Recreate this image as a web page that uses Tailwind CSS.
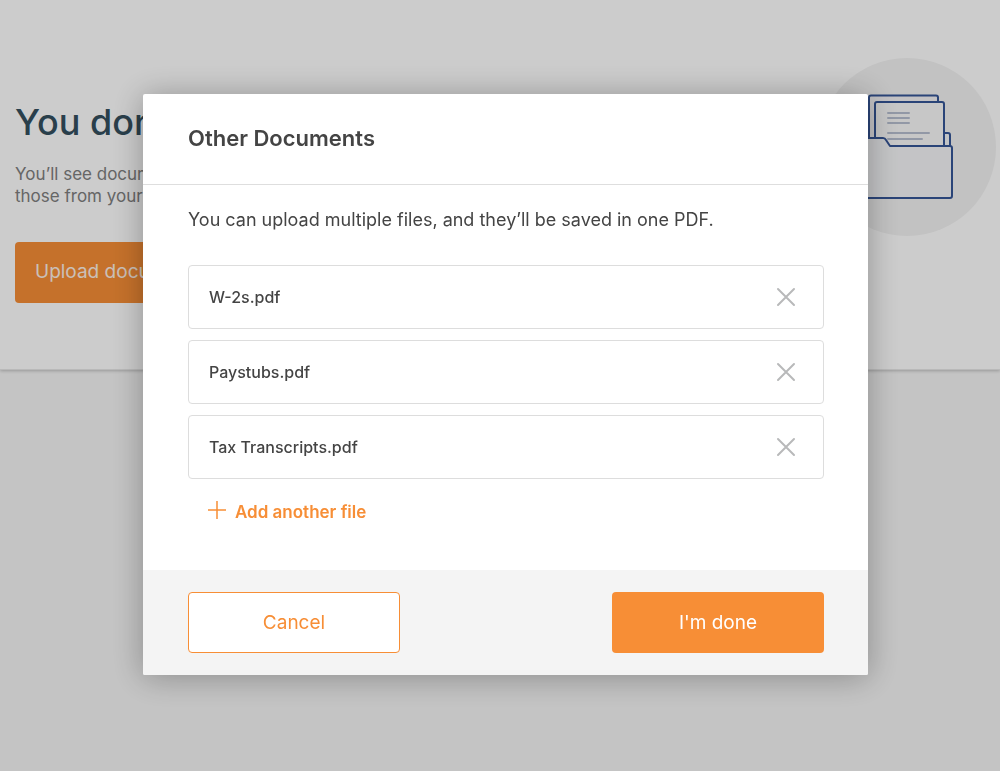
<!DOCTYPE html>
<html lang="en">
<head>
<meta charset="utf-8">
<meta name="viewport" content="width=device-width, initial-scale=1">
<title>Other Documents</title>
<script src="https://cdn.jsdelivr.net/npm/@tailwindcss/browser@4"></script>
</head>
<body class="min-h-screen bg-[#f5f5f5] font-['Inter','Liberation_Sans',sans-serif]">
  <main>
    <section class="flex items-start justify-between border-b border-[#e8e8e8] bg-white pt-[58px] pb-[66px] pl-[15px] pr-1 shadow-[0_1px_3px_rgba(0,0,0,0.22)]">
      <div class="pt-10">
        <h1 class="text-[36px] leading-12 font-medium text-[#344f5e]">You don’t</h1>
        <p class="mt-[17px] text-[17px] leading-[22px] text-[#808080]">You’ll see documents<br>those from your</p>
        <button type="button" class="mt-[35px] h-[61px] rounded-[4px] bg-[#f78e36] px-5 text-[19px] text-[#fdf0e6]">Upload documents</button>
      </div>
      <svg class="size-[178px]" viewBox="0 0 178 178" fill="none" aria-hidden="true">
        <circle cx="89" cy="89" r="89" fill="#f3f3f3"/>
        <g stroke="#355596" stroke-width="2" stroke-linejoin="round">
          <path d="M51 81V39.500q0-2 2-2h65q2 0 2 2V44" fill="#f4f3f6"/>
          <path d="M126 75h4q2 0 2 2v12h-6z" fill="#f3f5f8"/>
          <path d="M57 81V46q0-2 2-2h65q2 0 2 2v43H70z" fill="#f9f9f9"/>
          <path d="M6 80h59q2 0 3 2l4 6H132q2 0 2 2v48q0 2-2 2H6z" fill="#f5f6f8"/>
        </g>
        <path d="M70 55h21M70 60h21M70 65h21M70 75h41M70 81h34" stroke="#b7bfd0" stroke-width="2" stroke-linecap="round"/>
      </svg>
    </section>
  </main>

  <div class="fixed inset-0 flex items-start justify-center bg-black/20 pt-[94px] pl-[11px]">
    <div role="dialog" aria-modal="true" aria-labelledby="dialog-title" class="w-full max-w-[725px] overflow-hidden rounded-[2px] bg-white text-[#444444] shadow-[0_2px_32px_rgba(0,0,0,0.3)]">
      <header class="border-b border-[#dedede] px-[45px] pt-[28px] pb-[30px]">
        <h2 id="dialog-title" class="text-[22px] leading-8 font-semibold">Other Documents</h2>
      </header>
      <div class="pt-[23px] pr-11 pb-[46px] pl-[45px]">
        <p class="text-[18px] leading-6">You can upload multiple files, and they’ll be saved in one PDF.</p>
        <ul class="mt-[33px] flex flex-col gap-[11px] text-[16px] font-medium">
          <li class="flex h-16 items-center justify-between rounded-[4px] border border-[#dddddd] pr-[27px] pl-5">
            <span>W-2s.pdf</span>
            <button type="button" aria-label="Remove W-2s.pdf" class="text-[#b8b9ba]"><svg class="size-5" viewBox="0 0 20 20" fill="none" stroke="currentColor" stroke-width="2" stroke-linecap="round"><path d="M2 2l16 16M18 2L2 18"/></svg></button>
          </li>
          <li class="flex h-16 items-center justify-between rounded-[4px] border border-[#dddddd] pr-[27px] pl-5">
            <span>Paystubs.pdf</span>
            <button type="button" aria-label="Remove Paystubs.pdf" class="text-[#b8b9ba]"><svg class="size-5" viewBox="0 0 20 20" fill="none" stroke="currentColor" stroke-width="2" stroke-linecap="round"><path d="M2 2l16 16M18 2L2 18"/></svg></button>
          </li>
          <li class="flex h-16 items-center justify-between rounded-[4px] border border-[#dddddd] pr-[27px] pl-5">
            <span>Tax Transcripts.pdf</span>
            <button type="button" aria-label="Remove Tax Transcripts.pdf" class="text-[#b8b9ba]"><svg class="size-5" viewBox="0 0 20 20" fill="none" stroke="currentColor" stroke-width="2" stroke-linecap="round"><path d="M2 2l16 16M18 2L2 18"/></svg></button>
          </li>
        </ul>
        <button type="button" class="mt-[21px] ml-5 flex h-6 items-start gap-2 text-[17px] leading-6 font-semibold text-[#f78e36]">
          <svg class="size-[19px]" viewBox="0 0 19 19" fill="none" stroke="currentColor" stroke-width="1.500" aria-hidden="true"><path d="M9 1v18M0 10h18"/></svg>
          Add another file
        </button>
      </div>
      <footer class="flex justify-between bg-[#f4f4f4] pt-[22px] pr-11 pb-[22px] pl-[45px] text-[19px]">
        <button type="button" class="h-[61px] w-[212px] rounded-[4px] border border-[#f78e36] bg-white pt-0.5 text-[#f78e36]">Cancel</button>
        <button type="button" class="h-[61px] w-[212px] rounded-[4px] bg-[#f78e36] pt-0.5 text-white">I'm done</button>
      </footer>
    </div>
  </div>
</body>
</html>
